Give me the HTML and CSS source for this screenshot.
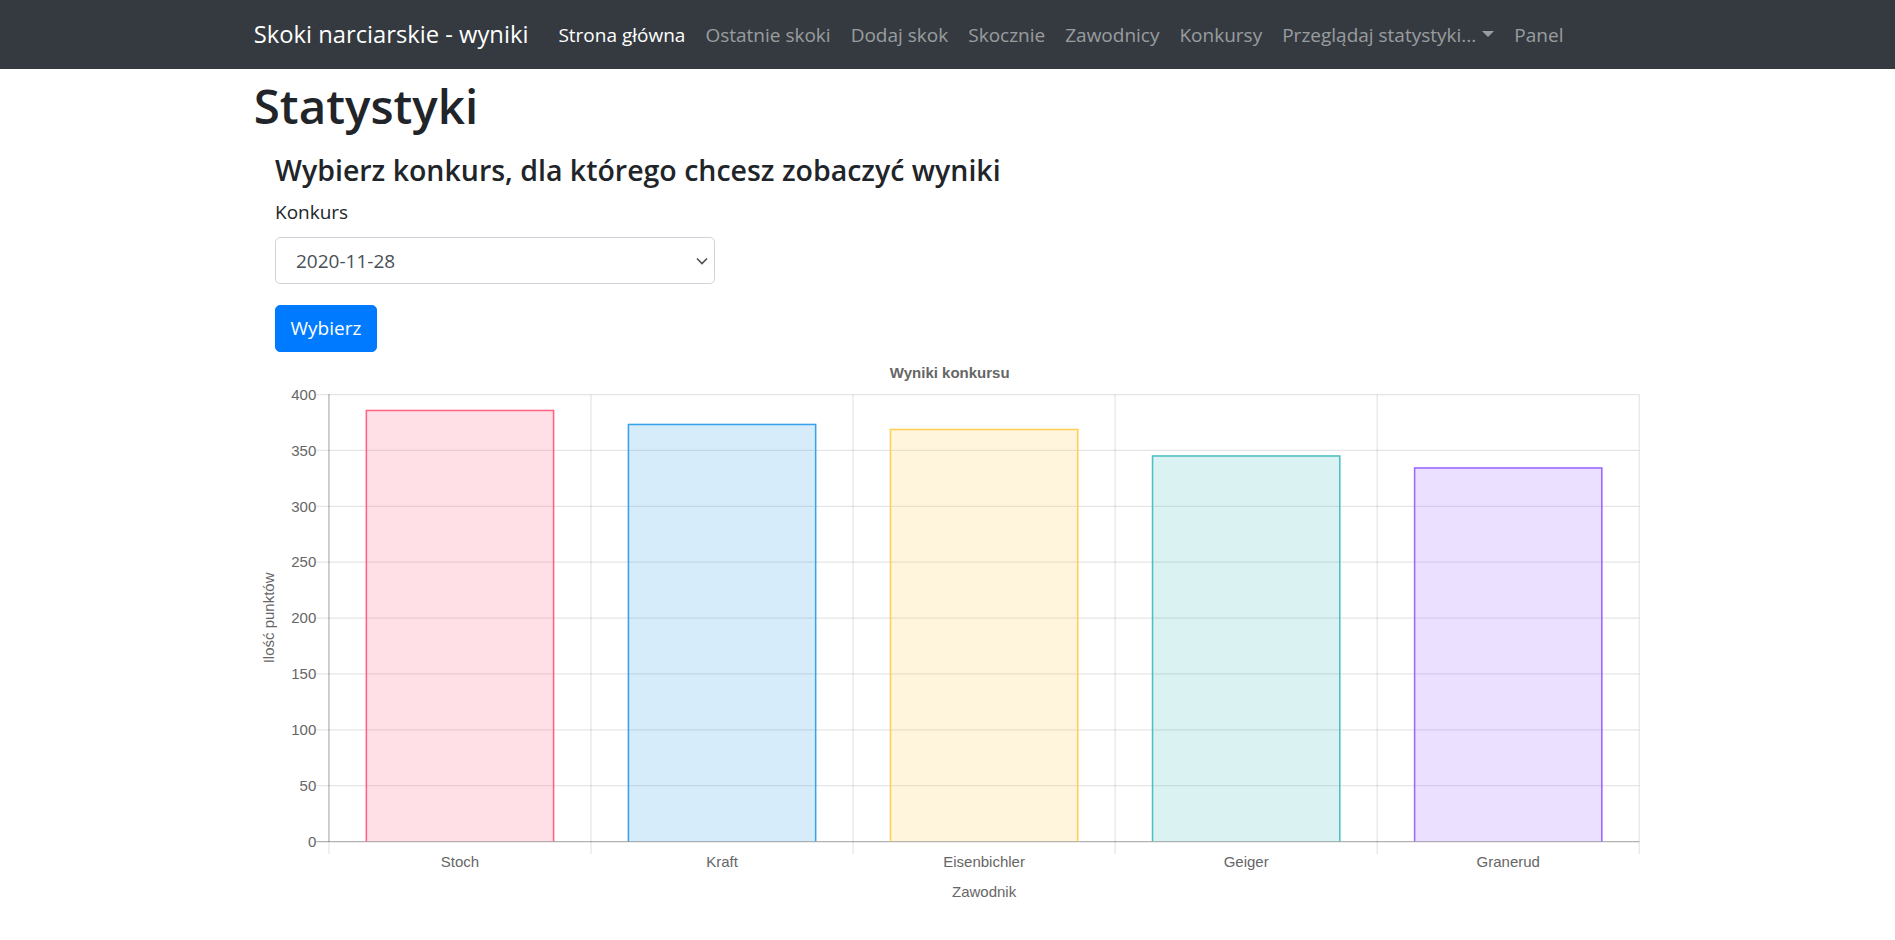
FILE: index.html
```html
<!DOCTYPE html>
<html lang="pl">
<head>
<meta charset="utf-8">
<title>Statystyki</title>
<link rel="stylesheet" href="styles.css">
</head>
<body>
<nav class="navbar">
  <div class="container nav-inner">
    <a class="brand" href="#">Skoki narciarskie - wyniki</a>
    <ul class="nav-list">
      <li><a class="nav-link active" href="#">Strona główna</a></li>
      <li><a class="nav-link" href="#">Ostatnie skoki</a></li>
      <li><a class="nav-link" href="#">Dodaj skok</a></li>
      <li><a class="nav-link" href="#">Skocznie</a></li>
      <li><a class="nav-link" href="#">Zawodnicy</a></li>
      <li><a class="nav-link" href="#">Konkursy</a></li>
      <li><a class="nav-link dropdown" href="#">Przeglądaj statystyki...<span class="caret"></span></a></li>
      <li><a class="nav-link" href="#">Panel</a></li>
    </ul>
  </div>
</nav>
<main class="container">
  <h1 class="page-title">Statystyki</h1>
  <section class="picker">
    <h4 class="picker-title">Wybierz konkurs, dla którego chcesz zobaczyć wyniki</h4>
    <label class="field-label" for="konkurs">Konkurs</label>
    <div class="select-wrap">
      <select id="konkurs" class="select">
        <option>2020-11-28</option>
      </select>
      <svg class="chevron" width="12" height="8" viewBox="0 0 12 8"><path d="M1 1.5 L6 6.5 L11 1.5" fill="none" stroke="#505050" stroke-width="1.6"/></svg>
    </div>
    <button class="btn" type="button">Wybierz</button>
  </section>
  <svg class="chart" width="1387.5" height="580" viewBox="253.75 356 1387.5 580">
    <g class="grid-light" stroke="rgba(0,0,0,0.1)" stroke-width="1.25">
      <line x1="316" y1="394.5" x2="1639" y2="394.5"/>
      <line x1="316" y1="450.4" x2="1639" y2="450.4"/>
      <line x1="316" y1="506.25" x2="1639" y2="506.25"/>
      <line x1="316" y1="562.1" x2="1639" y2="562.1"/>
      <line x1="316" y1="618" x2="1639" y2="618"/>
      <line x1="316" y1="673.9" x2="1639" y2="673.9"/>
      <line x1="316" y1="729.75" x2="1639" y2="729.75"/>
      <line x1="316" y1="785.6" x2="1639" y2="785.6"/>
      <line x1="328.7" y1="841.5" x2="328.7" y2="854"/>
      <line x1="590.76" y1="394.5" x2="590.76" y2="854"/>
      <line x1="852.82" y1="394.5" x2="852.82" y2="854"/>
      <line x1="1114.88" y1="394.5" x2="1114.88" y2="854"/>
      <line x1="1376.94" y1="394.5" x2="1376.94" y2="854"/>
      <line x1="1639" y1="394.5" x2="1639" y2="854"/>
    </g>
    <g stroke="rgba(0,0,0,0.3)" stroke-width="1.25">
      <line x1="328.7" y1="394" x2="328.7" y2="841.5"/>
      <line x1="316" y1="841.5" x2="1639" y2="841.5"/>
    </g>
    <g stroke-width="1.5">
      <rect x="365.38" y="409.7" width="188.7" height="431.8" fill="rgba(255,99,132,0.2)" stroke="none"/>
      <path d="M366.13 841.5 V410.45 H553.33 V841.5" fill="none" stroke="rgb(255,99,132)"/>
      <rect x="627.44" y="423.7" width="188.7" height="417.8" fill="rgba(54,162,235,0.2)" stroke="none"/>
      <path d="M628.19 841.5 V424.45 H815.39 V841.5" fill="none" stroke="rgb(54,162,235)"/>
      <rect x="889.5" y="428.7" width="188.7" height="412.8" fill="rgba(255,206,86,0.2)" stroke="none"/>
      <path d="M890.25 841.5 V429.45 H1077.45 V841.5" fill="none" stroke="rgb(255,206,86)"/>
      <rect x="1151.56" y="455.3" width="188.7" height="386.2" fill="rgba(75,192,192,0.2)" stroke="none"/>
      <path d="M1152.31 841.5 V456.05 H1339.51 V841.5" fill="none" stroke="rgb(75,192,192)"/>
      <rect x="1413.62" y="467.3" width="188.7" height="374.2" fill="rgba(153,102,255,0.2)" stroke="none"/>
      <path d="M1414.37 841.5 V468.05 H1601.57 V841.5" fill="none" stroke="rgb(153,102,255)"/>
    </g>
    <g class="chart-text" text-anchor="end">
      <text x="316" y="399.8">400</text>
      <text x="316" y="455.7">350</text>
      <text x="316" y="511.6">300</text>
      <text x="316" y="567.4">250</text>
      <text x="316" y="623.3">200</text>
      <text x="316" y="679.2">150</text>
      <text x="316" y="735.1">100</text>
      <text x="316" y="790.9">50</text>
      <text x="316" y="846.8">0</text>
    </g>
    <g class="chart-text" text-anchor="middle">
      <text x="459.73" y="867">Stoch</text>
      <text x="721.79" y="867">Kraft</text>
      <text x="983.85" y="867">Eisenbichler</text>
      <text x="1245.91" y="867">Geiger</text>
      <text x="1507.97" y="867">Granerud</text>
      <text x="983.85" y="897">Zawodnik</text>
      <text transform="translate(274 617.9) rotate(-90)" x="0" y="0">Ilość punktów</text>
      <text class="chart-title" x="949.5" y="378.3">Wyniki konkursu</text>
    </g>
  </svg>
</main>
</body>
</html>
```
FILE: styles.css
```css
* { box-sizing: border-box; }
html, body { margin: 0; padding: 0; }
body {
  font-family: "Open Sans", "Noto Sans", sans-serif;
  font-size: 19px;
  line-height: 1.5;
  color: #212529;
  background: #fff;
  overflow: hidden;
}
.container {
  max-width: 1425px;
  margin: 0 auto;
  padding: 0 18.75px;
}
.navbar {
  background: #343a40;
  height: 69px;
}
.nav-inner {
  display: flex;
  align-items: center;
  height: 69px;
}
.brand {
  font-size: 23.75px;
  color: #fff;
  text-decoration: none;
  margin-right: 20px;
  line-height: 1.5;
  white-space: nowrap;
}
.nav-list {
  display: flex;
  list-style: none;
  margin: 0;
  padding: 0;
}
.nav-link {
  display: block;
  padding: 0 10px;
  color: rgba(255,255,255,0.5);
  text-decoration: none;
  white-space: nowrap;
  line-height: 30px;
}
.nav-link.active { color: #fff; }
.caret {
  display: inline-block;
  margin-left: 6px;
  vertical-align: 5px;
  border-top: 6px solid;
  border-left: 6px solid transparent;
  border-right: 6px solid transparent;
}
.page-title {
  font-size: 47.5px;
  font-weight: 600;
  line-height: 57px;
  margin: 8px 0 18.6px;
}
.picker {
  padding-left: 21.25px;
}
.picker-title {
  font-size: 28.5px;
  font-weight: 600;
  line-height: 34px;
  margin: 0 0 11.8px;
}
.field-label {
  display: block;
  line-height: 28.5px;
  margin-bottom: 10.4px;
}
.select-wrap {
  position: relative;
  width: 440px;
  margin-bottom: 20.7px;
}
.select {
  appearance: none;
  -webkit-appearance: none;
  display: block;
  width: 100%;
  height: 47px;
  padding: 0 40px 0 20px;
  font-family: inherit;
  font-size: 19px;
  color: #495057;
  background: #fff;
  border: 1px solid #ced4da;
  border-radius: 5px;
  outline: none;
}
.chevron {
  position: absolute;
  right: 7px;
  top: 20px;
  pointer-events: none;
}
.btn {
  display: block;
  height: 47px;
  padding: 0 14.5px;
  font-family: inherit;
  font-size: 19px;
  color: #fff;
  background: #007bff;
  border: 1px solid #007bff;
  border-radius: 5px;
  margin-bottom: 4px;
  cursor: pointer;
}
.chart {
  display: block;
  width: 1387.5px;
  height: 580px;
}
.chart-text {
  font-family: "Liberation Sans", Arial, sans-serif;
  font-size: 15px;
  fill: #666;
}
.chart-title {
  font-weight: bold;
}
```
